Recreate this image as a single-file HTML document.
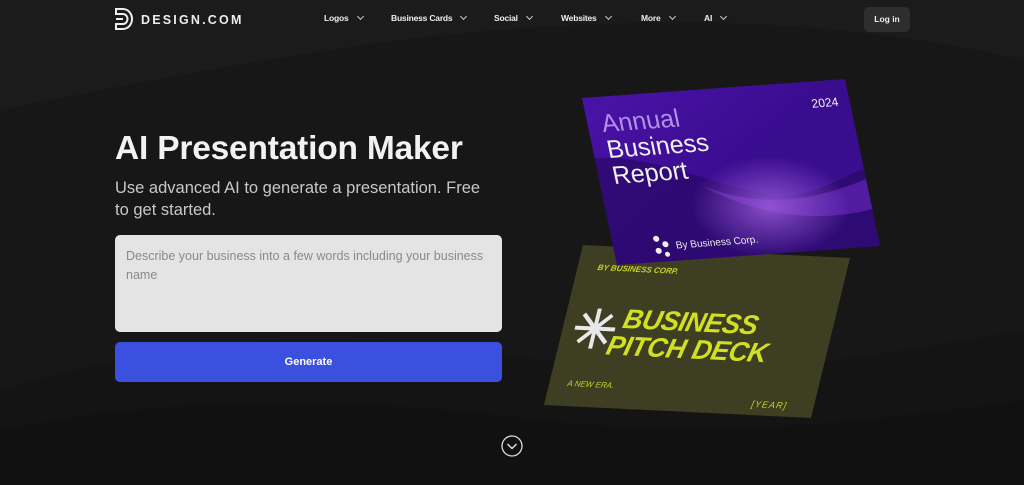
<!DOCTYPE html>
<html><head><meta charset="utf-8"><style>
*{margin:0;padding:0;box-sizing:border-box}
body{width:1024px;height:485px;overflow:hidden;background:#181818;font-family:"Liberation Sans",sans-serif;position:relative;color:#fff}
.bg{position:absolute;left:0;top:0}
.nav a{position:absolute;top:13px;font-size:8.5px;font-weight:bold;color:#eee;letter-spacing:-0.2px}
.nav a:after{content:"";display:inline-block;width:4px;height:4px;border-right:1.2px solid #ccc;border-bottom:1.2px solid #ccc;transform:rotate(45deg);margin-left:9px;position:relative;top:-2px}
h1{position:absolute;left:115px;top:130px;font-size:33.5px;font-weight:bold;color:#f2f2f2;letter-spacing:-0.2px}
.sub{position:absolute;left:115px;top:177px;width:382px;font-size:16.5px;line-height:22px;color:#c8c8c8}
.ta{position:absolute;left:115px;top:235px;width:387px;height:97px;background:#e4e4e4;border-radius:5px;padding:12px 11px;font-size:12.5px;line-height:19px;color:#8a8a8a}
.btn{position:absolute;left:115px;top:342px;width:387px;height:40px;background:#3c50e0;border-radius:5px;text-align:center;line-height:40px;font-size:11px;font-weight:bold;color:#fff}
</style></head><body>
<svg class="bg" width="1024" height="485">
<defs>
<linearGradient id="pg" x1="0" y1="0" x2="1" y2="1"><stop offset="0" stop-color="#4a13a8"/><stop offset="0.5" stop-color="#3a0c8e"/><stop offset="1" stop-color="#3a0f90"/></linearGradient>
<radialGradient id="gl" cx="0.62" cy="0.72" r="0.3"><stop offset="0" stop-color="#a060e0" stop-opacity="0.8"/><stop offset="1" stop-color="#a060e0" stop-opacity="0"/></radialGradient>
</defs>
<rect width="1024" height="485" fill="#171717"/>
<path d="M0 0 H1024 V60 C850 20 650 10 400 40 C250 60 100 90 0 110Z" fill="#1b1b1b"/>
<path d="M0 390 C200 330 350 330 540 360 C700 385 850 360 1024 330 V485 H0Z" fill="#141414"/>
<path d="M0 430 C200 390 380 400 540 420 C720 440 880 420 1024 400 V485 H0Z" fill="#111"/>
<g transform="matrix(1,0.0487,-0.244,1,583,245)">
<rect width="267" height="160" fill="#3e3f22"/>
<text x="20" y="24" font-size="8" font-style="italic" font-weight="bold" fill="#c7d224">BY BUSINESS CORP.</text>
<text x="58" y="80" font-size="27" font-style="italic" font-weight="bold" fill="#d2e024" letter-spacing="-0.5">BUSINESS</text>
<text x="48" y="107" font-size="27" font-style="italic" font-weight="bold" fill="#d2e024" letter-spacing="-0.5">PITCH DECK</text>
<g transform="translate(32,82)" stroke="#e8e8e8" stroke-width="4"><line x1="-20" y1="0" x2="20" y2="0"/><line x1="0" y1="-20" x2="0" y2="20"/><line x1="-14" y1="-14" x2="14" y2="14"/><line x1="-14" y1="14" x2="14" y2="-14"/></g>
<text x="18" y="140" font-size="8" font-style="italic" fill="#c7d224">A NEW ERA.</text>
<text x="205" y="152" font-size="9" font-style="italic" fill="#c7d224" letter-spacing="1">[YEAR]</text>
</g>
<g transform="matrix(1,-0.0722,0.2096,1,582,98)">
<rect width="263" height="167" fill="url(#pg)"/>
<path d="M0 60 C60 60 120 100 170 110 C210 115 240 95 263 90 V167 H0Z" fill="#2a0866" opacity="0.7"/>
<path d="M100 95 C150 120 200 120 263 100 V130 C210 140 150 130 100 95Z" fill="#6a28c0" opacity="0.6"/>
<rect width="263" height="167" fill="url(#gl)"/>
<text x="14" y="35" font-size="25" fill="#b58ee8">Annual</text>
<text x="14" y="61" font-size="25" fill="#f0f0f0">Business</text>
<text x="14" y="87" font-size="25" fill="#f0f0f0">Report</text>
<text x="225" y="26" font-size="12" fill="#f0f0f0">2024</text>
<g fill="#eee"><circle cx="44" cy="144" r="3"/><circle cx="52" cy="150" r="3"/><circle cx="44" cy="156" r="3"/><circle cx="52" cy="160" r="2.5"/></g>
<text x="62" y="155" font-size="10" fill="#e8e8e8">By Business Corp.</text>
</g>
<circle cx="512" cy="446" r="10" fill="none" stroke="#ddd" stroke-width="1.3"/>
<path d="M507.5 444 L512 448.5 L516.5 444" fill="none" stroke="#ddd" stroke-width="1.5"/>
<g fill="none" stroke="#eee" stroke-width="2"><path d="M116 9 H123 A9 10 0 0 1 123 29 H116 V24 H123 A4.5 5 0 0 0 123 14 H116Z"/><path d="M116 19 H123"/></g>
<text x="141" y="24" font-size="12.5" font-weight="bold" fill="#eee" letter-spacing="2.2">DESIGN.COM</text>
<rect x="864" y="7" width="46" height="25" rx="5" fill="#2e2e2e"/>
<text x="887" y="22" font-size="8.5" font-weight="bold" fill="#eee" text-anchor="middle">Log in</text>
</svg>
<div class="nav">
<a style="left:324px">Logos</a><a style="left:391px">Business Cards</a><a style="left:494px">Social</a><a style="left:561px">Websites</a><a style="left:641px">More</a><a style="left:704px">AI</a>
</div>
<h1>AI Presentation Maker</h1>
<div class="sub">Use advanced AI to generate a presentation. Free to get started.</div>
<div class="ta">Describe your business into a few words including your business name</div>
<div class="btn">Generate</div>
</body></html>
